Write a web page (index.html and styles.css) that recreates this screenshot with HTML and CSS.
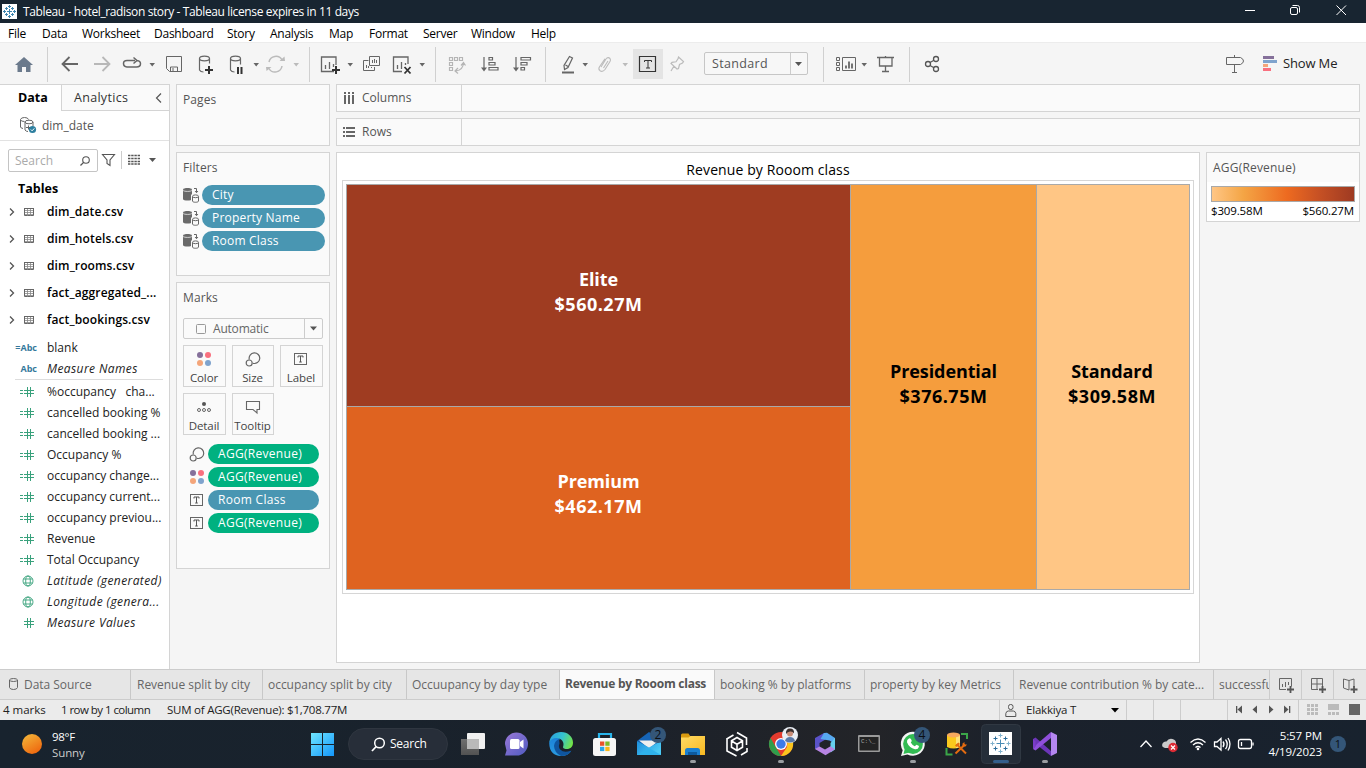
FILE: index.html
```html
<!DOCTYPE html>
<html lang="en">
<head>
<meta charset="utf-8">
<title>Tableau - hotel_radison story</title>
<link rel="stylesheet" href="styles.css">
</head>
<body>
<svg class="defs" width="0" height="0">
  <defs>
    <symbol id="chev" viewBox="0 0 6 8"><path d="M1 0.5L4.5 4 1 7.500" fill="none" stroke="#555" stroke-width="1.300"/></symbol>
    <symbol id="table" viewBox="0 0 10 10"><path d="M.5 1.500h9v7h-9zM0 1.500h10" fill="none" stroke="#666"/><path d="M1 3.500h8M1 5.500h8M1 7.500h8M3.500 2v7M6.500 2v7" fill="none" stroke="#888" stroke-width=".8"/></symbol>
    <symbol id="calc" viewBox="0 0 14 10"><path d="M0 3.500h3M0 6.500h3M4 3.500h10M4 6.500h10M7.500 0v10M10.500 0v10" fill="none" stroke="#39a17c"/></symbol>
    <symbol id="hash" viewBox="0 0 14 10"><path d="M4 3.500h10M4 6.500h10M7.500 0v10M10.500 0v10" fill="none" stroke="#39a17c"/></symbol>
    <symbol id="globe" viewBox="0 0 12 12"><g fill="none" stroke="#39a17c" stroke-width=".9"><circle cx="6" cy="6" r="5"/><ellipse cx="6" cy="6" rx="2.300" ry="5"/><path d="M1.500 4h9M1.500 8h9"/></g></symbol>
    <symbol id="ctx" viewBox="0 0 17 16"><path d="M0 2.500C0 .5 9 .5 9 2.500V12c0 2-9 2-9 0z" fill="#6a6a6a"/><path d="M0 3.300c1 1.500 8 1.500 9 0" fill="none" stroke="#e8e8e8" stroke-width=".8"/><path d="M8 7.500h4v8H8z" fill="#fafafa"/><path d="M9.500 9.500v4.500c0 1.700 6 1.700 6 0V9.500" fill="#fafafa" stroke="#666"/><ellipse cx="12.500" cy="9.300" rx="3" ry="1.400" fill="#fafafa" stroke="#666"/><path d="M11 1.500h2.500v4M12 4l1.500 1.700L15 4" fill="none" stroke="#666"/></symbol>
    <symbol id="sizei" viewBox="0 0 16 16"><g fill="none" stroke="#666" stroke-width="1.200"><path d="M4.300 8.500A5.300 5.300 0 1 1 8 12.300"/><circle cx="4.200" cy="12" r="3"/></g></symbol>
    <symbol id="colori" viewBox="0 0 16 16"><circle cx="4" cy="4" r="3" fill="#85709a"/><circle cx="12" cy="4" r="3" fill="#f9707f"/><circle cx="4" cy="12" r="3" fill="#f4a57a"/><circle cx="12" cy="12" r="3" fill="#7fa3cd"/></symbol>
    <symbol id="labeli" viewBox="0 0 13 12"><rect x=".5" y=".5" width="12" height="11" fill="none" stroke="#666"/><path d="M4 4.500v-1.500h5v1.500M6.500 3v6M5.200 9h2.600" fill="none" stroke="#555"/></symbol>
  </defs>
</svg>

<header class="titlebar">
  <svg class="appicon" width="15" height="15" viewBox="0 0 15 15"><rect width="15" height="15" fill="#fff"/><path d="M7.500 5v5M5 7.500h5M7.500 1v3M6 2.500h3M7.500 11v3M6 12.500h3M1 7.500h3M2.500 6v3M11 7.500h3M12.500 6v3M4.500 3v3M3 4.500h3M10.500 3v3M9 4.500h3M4.500 9v3M3 10.500h3M10.500 9v3M9 10.500h3" stroke="#3f86b0" fill="none"/></svg>
  <span class="apptitle">Tableau - hotel_radison story - Tableau license expires in 11 days</span>
  <svg class="winctl" width="126" height="23" viewBox="1240 0 126 23"><path d="M1245 10.500h10" stroke="#fff"/><g fill="none" stroke="#fff"><rect x="1290.500" y="7.500" width="7" height="7" rx="1.500"/><path d="M1292.500 5.500h5q2 0 2 2v5M1336.500 5.500l9.500 9.500M1346 5.500l-9.500 9.500"/></g></svg>
</header>

<nav class="menubar">
  <span class="m1">File</span><span class="m2">Data</span><span class="m3">Worksheet</span><span class="m4">Dashboard</span><span class="m5">Story</span><span class="m6">Analysis</span><span class="m7">Map</span><span class="m8">Format</span><span class="m9">Server</span><span class="m10">Window</span><span>Help</span>
</nav>

<div class="toolbar">
  <svg width="704" height="41" viewBox="0 43 704 41">
    <g stroke="#d0d0d0"><path d="M47.500 47v35M309.500 47v35M435.500 47v35M545.500 47v35"/></g>
    <path d="M24 57l9 8h-2.500v7h-4.500v-5h-4v5h-4.500v-7H15z" fill="#6b7a8c"/>
    <path d="M62.500 64H78M69.500 57l-7 7 7 7" stroke="#666" stroke-width="1.800" fill="none"/>
    <path d="M94 64h15.500M102.500 57l7 7-7 7" stroke="#b8b8b8" stroke-width="1.800" fill="none"/>
    <path d="M135 60.500h-8q-3.500 0-3.500 3t3.500 3.500h9.500q4 0 4-3.200 0-3-3.500-3.300M133.500 57.500l3.500 3-3.500 3" stroke="#666" stroke-width="1.500" fill="none"/>
    <g fill="#666"><path d="M149.500 63h5.500l-2.800 3.500zM253.500 63h5.500l-2.800 3.500zM347.500 63h5.500l-2.800 3.500zM419.500 63h5.500l-2.800 3.500zM582.500 63h5.500l-2.800 3.500z"/></g>
    <path d="M293.500 63h5.500l-2.800 3.500zM622.500 63h5.500l-2.800 3.500z" fill="#bbb"/>
    <path d="M166.500 56.500h15v15h-12l-3-3zM170.500 71v-4h7v4M173 68v3" stroke="#666" fill="none"/>
    <g fill="none" stroke="#666" stroke-width="1.200"><ellipse cx="204.500" cy="58.500" rx="5" ry="2.300"/><path d="M199.500 58.500V70q1 2 4 2M209.500 58.500v5"/><ellipse cx="235.500" cy="58.500" rx="5" ry="2.300"/><path d="M230.500 58.500V70q1 2 4 2M240.500 58.500v6"/></g>
    <path d="M209 66v8M205 70h8M238 67v7M241.500 67v7" stroke="#333" stroke-width="2" fill="none"/>
    <g fill="none" stroke="#bbb" stroke-width="1.500"><path d="M269 62a7 7 0 0 1 13-2M282 66a7 7 0 0 1-13 2.500"/></g><path d="M279.500 61h5.500l-.5-4.500zM266 67h5.500l-5 4z" fill="#bbb"/>
    <path d="M334 71.500h-12.500v-14.500h14.500V65M325.500 69v-4M329.500 69v-7M333.500 67v-3" stroke="#666" stroke-width="1.300" fill="none"/><path d="M336 66v8M332 70h8" stroke="#333" stroke-width="2"/>
    <path d="M368.500 60.500h-5v10h11v-3.500M369.500 56.500h10v9h-10zM372.500 63v-3M374.500 63v-4M376.500 63v-3M366.500 68v-3M368.500 68v-2M371.500 68v-1" stroke="#666" fill="none"/>
    <path d="M402 71.500h-8.500v-14.500h14.500V64M397.500 69v-4M401.500 69v-7M405.500 65v-2" stroke="#666" stroke-width="1.300" fill="none"/><path d="M404.500 67l6 6.500M410.500 67l-6 6.500" stroke="#333" stroke-width="1.800"/>
    <g fill="none" stroke="#b5b5b5" stroke-width="1.200"><path d="M449.500 57.500h3v3h-3zM454.500 57.500h3v3h-3zM459.500 57.500h3v3h-3zM449.500 62.500h3v3h-3zM449.500 67.500h3v3h-3zM456 71q7-1 7.500-8M461 65.500l2.500-3 2 3M458 68l-3 3 3 2.500"/></g>
    <g fill="none" stroke="#666" stroke-width="1.200"><path d="M484 57V69M489 57.500h3.500v2.500h-3.500zM489 62.500h6v2.500h-6zM489 67.500h9v2.500h-9zM516 57V69M521 57.500h9.500v2.500h-9.500zM521 62.500h6v2.500h-6zM521 67.500h3.500v2.500h-3.500z"/>
    <path d="M569.500 56.500l3 1.500-4.500 9.500-3.500 2-.5-4zM565.500 65l3 1.800"/></g>
    <path d="M481 67.500h6L484 71.500zM513 67.500h6L516 71.500z" fill="#666"/>
    <path d="M562 71.500h12v2h-12z" fill="#666"/>
    <path d="M601 67l5-8q2-2.500 4-.5 1 1.500 0 3l-5 8q-2.500 3-5 1.200-2-1.700-.5-4l5.500-8M603.500 68l4.500-7" fill="none" stroke="#bbb" stroke-width="1.100"/>
    <rect x="633" y="49" width="30" height="30" fill="#e4e4e4"/><path d="M639.500 56.500h16v15h-16z" fill="none" stroke="#333" stroke-width="1.200"/><path d="M644.500 62v-1.500h7V62M648 60.500v7.500M646 68h4" fill="none" stroke="#333"/>
    <path d="M678.500 57l5 4.500-1 1.500-3 1.500-1 4-1.500.5-6-5.500 1-1.200 4-.5 2-3zM674 66l-3 5" fill="none" stroke="#bbb" stroke-width="1.200"/>
  </svg>
  <div class="fit"><span>Standard</span><svg width="17" height="21" viewBox="0 0 17 21"><path d="M.5 0v21" stroke="#ccc"/><path d="M5 9h7L8.500 13z" fill="#555"/></svg></div>
  <svg width="475" height="41" viewBox="808 43 475 41">
    <path d="M823.500 47v35M909.500 47v35" stroke="#d0d0d0"/>
    <g fill="none" stroke="#666"><path d="M836.500 57.500h3v3h-3zM836.500 62.500h3v3h-3zM836.500 67.500h3v3h-3zM842.500 57.500h13v13h-13z"/><path d="M846 68.500v-3M849 68.500v-7M852 68.500v-5" stroke-width="1.800"/></g><path d="M861.500 63h5.500l-2.800 3.500z" fill="#666"/>
    <path d="M877 57.500h17M879.500 57.500v8.500h12.500v-8.500M885.500 56v2M885.500 66v5.500M882 71.500h7" fill="none" stroke="#666" stroke-width="1.300"/>
    <g fill="none" stroke="#555" stroke-width="1.300"><circle cx="928" cy="64" r="2.500"/><circle cx="936" cy="59" r="2.500"/><circle cx="936" cy="69" r="2.500"/><path d="M930 62.500l4-2.200M930 65.500l4 2.200"/></g>
    <path d="M1226.500 57.500h14q3 1.500 3 3.500t-3 3.500h-14zM1234.500 55v2.500M1234.500 65v7.500M1232 72.500h5" fill="none" stroke="#666"/>
    <path d="M1263 56h11v3h-11z" fill="#85709a"/><path d="M1263 60h14v3h-14z" fill="#7fa3cd"/><path d="M1263 64h5v3h-5z" fill="#f4a57a"/><path d="M1263 68h8v3h-8z" fill="#f9707f"/>
  </svg>
  <span class="showme">Show Me</span>
</div>

<main class="work">
  <aside class="side">
    <div class="sidetabs"><div class="t-data">Data</div><div class="t-an"><span>Analytics</span><svg width="7" height="10" viewBox="0 0 7 10"><path d="M6 .5L1.500 5 6 9.500" fill="none" stroke="#555" stroke-width="1.200"/></svg></div></div>
    <div class="ds"><svg width="17" height="17" viewBox="0 0 17 17"><g fill="none" stroke="#666"><path d="M3 11.500Q.5 11 .5 10V2.500Q1 .5 4.500 .5t4 2M.5 3q1 1.500 4 1.500"/><ellipse cx="9" cy="5" rx="4" ry="1.800" /><path d="M5 5v8q1 1.500 3 1.500M13 5v4M6 10.500h4M8.500 8.500v4"/></g><circle cx="12.500" cy="12.500" r="3.600" fill="#2d7f9f"/><path d="M10.800 12.500l1.300 1.300 2.200-2.400" stroke="#fff" fill="none"/></svg><span>dim_date</span></div>
    <div class="searchrow"><div class="search"><span>Search</span><svg width="10" height="10" viewBox="0 0 10 10"><circle cx="6" cy="4" r="3.300" fill="none" stroke="#555" stroke-width="1.100"/><path d="M3.600 6.400L.5 9.500" stroke="#555" stroke-width="1.300"/></svg></div>
      <svg width="60" height="20" viewBox="100 150 60 20"><path d="M102.500 154.500h12l-4.500 5.500v5.500l-3-2v-3.500z" fill="none" stroke="#555" stroke-width="1.100"/><path d="M121.500 151v18" stroke="#ccc"/><path d="M128 155.500h12M128 158.500h12M128 161.500h12M128 164h12" stroke="#555" stroke-width="1.300" stroke-dasharray="2.400 .8"/><path d="M149 158h7l-3.500 4z" fill="#555"/></svg></div>
    <div class="tables">Tables</div>
    <div class="trow"><svg width="6" height="8"><use href="#chev"/></svg><svg width="10" height="10"><use href="#table"/></svg><span>dim_date.csv</span></div>
    <div class="trow"><svg width="6" height="8"><use href="#chev"/></svg><svg width="10" height="10"><use href="#table"/></svg><span>dim_hotels.csv</span></div>
    <div class="trow"><svg width="6" height="8"><use href="#chev"/></svg><svg width="10" height="10"><use href="#table"/></svg><span>dim_rooms.csv</span></div>
    <div class="trow"><svg width="6" height="8"><use href="#chev"/></svg><svg width="10" height="10"><use href="#table"/></svg><span>fact_aggregated_...</span></div>
    <div class="trow last"><svg width="6" height="8"><use href="#chev"/></svg><svg width="10" height="10"><use href="#table"/></svg><span>fact_bookings.csv</span></div>
    <div class="frow"><b>=Abc</b><span>blank</span></div>
    <div class="frow it"><b>Abc</b><span>Measure Names</span></div>
    <div class="fdiv"></div>
    <div class="frow"><svg width="14" height="10"><use href="#calc"/></svg><span>%occupancy &nbsp; cha...</span></div>
    <div class="frow"><svg width="14" height="10"><use href="#calc"/></svg><span>cancelled booking %</span></div>
    <div class="frow"><svg width="14" height="10"><use href="#calc"/></svg><span>cancelled booking ...</span></div>
    <div class="frow"><svg width="14" height="10"><use href="#calc"/></svg><span>Occupancy %</span></div>
    <div class="frow"><svg width="14" height="10"><use href="#calc"/></svg><span>occupancy change...</span></div>
    <div class="frow"><svg width="14" height="10"><use href="#calc"/></svg><span>occupancy current...</span></div>
    <div class="frow"><svg width="14" height="10"><use href="#calc"/></svg><span>occupancy previou...</span></div>
    <div class="frow"><svg width="14" height="10"><use href="#calc"/></svg><span>Revenue</span></div>
    <div class="frow"><svg width="14" height="10"><use href="#calc"/></svg><span>Total Occupancy</span></div>
    <div class="frow it"><svg class="gl" width="12" height="12"><use href="#globe"/></svg><span>Latitude (generated)</span></div>
    <div class="frow it"><svg class="gl" width="12" height="12"><use href="#globe"/></svg><span>Longitude (genera...</span></div>
    <div class="frow it"><svg width="14" height="10"><use href="#hash"/></svg><span>Measure Values</span></div>
  </aside>

  <section class="cards">
    <div class="card pages"><h3>Pages</h3></div>
    <div class="card filters"><h3>Filters</h3>
      <div class="prow"><svg width="17" height="16"><use href="#ctx"/></svg><div class="pill blue">City</div></div>
      <div class="prow"><svg width="17" height="16"><use href="#ctx"/></svg><div class="pill blue">Property Name</div></div>
      <div class="prow"><svg width="17" height="16"><use href="#ctx"/></svg><div class="pill blue">Room Class</div></div>
    </div>
    <div class="card marks"><h3>Marks</h3>
      <div class="msel"><svg width="10" height="10" viewBox="0 0 10 10"><rect x=".5" y=".5" width="9" height="9" rx="1" fill="none" stroke="#999"/></svg><span>Automatic</span><svg width="18" height="19" viewBox="0 0 18 19"><path d="M.5 0v19" stroke="#ccc"/><path d="M6 7.500h7L9.500 11.500z" fill="#555"/></svg></div>
      <div class="mgrid">
        <div class="mb"><svg width="16" height="16"><use href="#colori"/></svg><span>Color</span></div>
        <div class="mb"><svg width="16" height="16"><use href="#sizei"/></svg><span>Size</span></div>
        <div class="mb"><svg width="16" height="16" viewBox="-1 -2 16 16"><use href="#labeli" width="13" height="12"/></svg><span>Label</span></div>
        <div class="mb"><svg width="16" height="16" viewBox="0 0 16 16"><circle cx="8" cy="5" r="2" fill="#555"/><g fill="none" stroke="#666"><circle cx="3" cy="11" r="1.500"/><circle cx="8" cy="11" r="1.500"/><circle cx="13" cy="11" r="1.500"/></g></svg><span>Detail</span></div>
        <div class="mb"><svg width="16" height="16" viewBox="0 0 16 16"><path d="M1.500 2.500h13v8h-2.500v3.500l-4-3.500h-6.500z" fill="none" stroke="#666" stroke-width="1.100"/></svg><span>Tooltip</span></div>
      </div>
      <div class="prow mk"><svg width="16" height="16"><use href="#sizei"/></svg><div class="pill green">AGG(Revenue)</div></div>
      <div class="prow mk"><svg width="16" height="16"><use href="#colori"/></svg><div class="pill green">AGG(Revenue)</div></div>
      <div class="prow mk"><svg width="16" height="16" viewBox="-1 -2 16 16"><use href="#labeli" width="13" height="12"/></svg><div class="pill blue">Room Class</div></div>
      <div class="prow mk"><svg width="16" height="16" viewBox="-1 -2 16 16"><use href="#labeli" width="13" height="12"/></svg><div class="pill green">AGG(Revenue)</div></div>
    </div>
  </section>

  <section class="viewcol">
    <div class="shelf"><div class="shl"><svg width="12" height="13" viewBox="0 0 12 13"><path d="M2 0v2M6 0v2M10 0v2M2 3v9M6 3v9M10 3v9" stroke="#666" stroke-width="2"/></svg><span>Columns</span></div></div>
    <div class="shelf"><div class="shl"><svg width="12" height="13" viewBox="0 0 12 13"><path d="M0 2h2M0 6h2M0 10h2M3 2h9M3 6h9M3 10h9" stroke="#666" stroke-width="2"/></svg><span>Rows</span></div></div>
    <div class="viewrow">
      <div class="view">
        <div class="vtitle">Revenue by Rooom class</div>
        <div class="frame"><div class="tree">
          <div class="tm elite"><span>Elite</span><span class="val">$560.27M</span></div>
          <div class="tm premium"><span>Premium</span><span class="val">$462.17M</span></div>
          <div class="tm pres"><span>Presidential</span><span class="val">$376.75M</span></div>
          <div class="tm stand"><span>Standard</span><span class="val">$309.58M</span></div>
        </div></div>
      </div>
      <div class="legend"><h3>AGG(Revenue)</h3><div class="lbody"><div class="ramp"></div><div class="lval"><span>$309.58M</span><span>$560.27M</span></div></div></div>
    </div>
  </section>
</main>

<div class="tabs">
  <div class="tab dsrc"><svg width="9" height="12" viewBox="0 0 9 12"><path d="M.5 2v7.500q.5 2 4 2t4-2V2q-.5-1.500-4-1.500T.5 2q.5 1.500 4 1.500T8.500 2" fill="none" stroke="#666"/></svg><span>Data Source</span></div>
  <div class="tab w1">Revenue split by city</div><div class="tab w2">occupancy split by city</div><div class="tab w3">Occuupancy by day type</div><div class="tab w4 on">Revenue by Rooom class</div><div class="tab w5">booking % by platforms</div><div class="tab w6">property by key Metrics</div><div class="tab w7">Revenue contribution % by cate...</div><div class="tab w8">successfu</div>
  <svg width="97" height="29" viewBox="1269 670 97 29"><path d="M1269.500 670v29M1301.500 670v29M1333.500 670v29" stroke="#ccc"/><g fill="none" stroke="#666"><path d="M1286 689.500h-6.500v-11h12v8M1282.500 687v-3M1285.500 687v-5M1288.500 685v-3M1318 689.500h-6.500v-11h11v8M1311.500 684h11M1317 678.500v11M1349 690l-5.500-2v-9l5.500 1.500 5-1.500v8M1349 680.500V690"/></g><path d="M1290.500 686v7M1287 689.500h7M1322.500 686v7M1319 689.500h7M1354 686v7M1350.500 689.500h7" stroke="#555" stroke-width="1.800"/></svg>
</div>

<div class="status">
  <span class="s1">4 marks</span><span class="s2">1 row by 1 column</span><span class="s3">SUM of AGG(Revenue): $1,708.77M</span>
  <div class="user"><svg width="12" height="13" viewBox="0 0 12 13"><g fill="none" stroke="#555"><rect x="3.500" y=".5" width="4.500" height="5" rx="2"/><path d="M.8 12.500v-3q.5-2.500 2.500-2.500h5q2 0 2.500 2.500v3z"/></g></svg><span>Elakkiya T</span><svg width="8" height="5" viewBox="0 0 8 5"><path d="M0 0h8L4 4.500z" fill="#000"/></svg></div>
  <svg width="240" height="20" viewBox="1126 700 240 20"><path d="M1126.500 700v20M1153.500 700v20M1180.500 700v20M1227.500 700v20M1298.500 700v20" stroke="#ccc"/><path d="M1236 706h1.300v7h-1.300zM1242 705.500v8l-4.500-4zM1257 705.500v8l-4.500-4zM1269 705.500v8l4.500-4zM1284 705.500v8l4.500-4zM1289 706h1.300v7H1289z" fill="#555"/><path d="M1307 704h3v3h-3zM1311 704h3v3h-3zM1315 704h3v3h-3zM1307 708h3v3h-3zM1311 708h3v3h-3zM1315 708h3v3h-3zM1307 712h3v3h-3zM1311 712h3v3h-3zM1315 712h3v3h-3zM1328 704h11v6h-11zM1328 712h3v3h-3zM1332 712h3v3h-3zM1336 712h3v3h-3z" fill="#bbb"/><path d="M1349 704h11v11h-11z" fill="#666"/></svg>
</div>

<footer class="taskbar">
  <div class="weather"><svg width="20" height="20" viewBox="0 0 20 20"><defs><linearGradient id="sun" x1="0" y1="0" x2=".6" y2="1"><stop offset="0" stop-color="#f3bb3c"/><stop offset="1" stop-color="#ef6a10"/></linearGradient></defs><circle cx="10" cy="10" r="10" fill="url(#sun)"/></svg><div><span class="deg">98°F</span><span class="sunny">Sunny</span></div></div>
  <svg class="win" width="23" height="23" viewBox="0 0 23 23"><defs><linearGradient id="wg" x1="0" y1="0" x2="1" y2="1"><stop offset="0" stop-color="#6fe6ff"/><stop offset="1" stop-color="#1396fb"/></linearGradient></defs><path d="M0 0h11v11H0zM12 0h11v11H12zM0 12h11v11H0zM12 12h11v11H12z" fill="url(#wg)"/></svg>
  <div class="tsearch"><svg width="15" height="15" viewBox="0 0 15 15"><circle cx="8.500" cy="6" r="4.800" fill="none" stroke="#fff" stroke-width="1.500"/><path d="M5.200 9.500L1 14" stroke="#fff" stroke-width="1.800"/></svg><span>Search</span></div>
  <svg class="apps" width="812" height="48" viewBox="448 720 812 48">
    <defs>
      <linearGradient id="edge" x1="0" y1=".3" x2="1" y2=".6"><stop offset="0" stop-color="#2aa0dc"/><stop offset=".5" stop-color="#35c3d0"/><stop offset="1" stop-color="#74e445"/></linearGradient>
      <linearGradient id="edgeb" x1="0" y1="0" x2="0" y2="1"><stop offset="0" stop-color="#1c82d8"/><stop offset="1" stop-color="#2a9be0"/></linearGradient>
      <linearGradient id="chat" x1="0" y1="0" x2="1" y2="1"><stop offset="0" stop-color="#9a78d8"/><stop offset="1" stop-color="#4f5bc0"/></linearGradient>
      <linearGradient id="fold" x1="0" y1="0" x2="1" y2="1"><stop offset="0" stop-color="#ffdb65"/><stop offset="1" stop-color="#f8b821"/></linearGradient>
      <linearGradient id="mail" x1="0" y1="0" x2="1" y2=".5"><stop offset="0" stop-color="#1c8edc"/><stop offset="1" stop-color="#4bcaf5"/></linearGradient>
      <linearGradient id="grayv" x1="0" y1="0" x2="0" y2="1"><stop offset="0" stop-color="#6f6f6f"/><stop offset="1" stop-color="#525252"/></linearGradient>
    </defs>
    <rect x="467" y="733" width="18" height="16" rx="1" fill="#f1f1f1"/><rect x="461" y="739" width="18" height="16" fill="url(#grayv)"/><rect x="467" y="739" width="12" height="10" fill="#b9b9b9"/>
    <path d="M505 744a11.500 11.500 0 1 1 11.500 11.500H505l1.500-5z" fill="url(#chat)"/><rect x="510" y="739" width="9.500" height="10" rx="1.500" fill="#fff"/><path d="M520 742l3.500-2.500v9l-3.500-2.500z" fill="#fff"/>
    <path d="M549.200 743C550 738 556 736 560 739q-3 2-3 6.500 1 7 8.500 7.500 4 0 6-2.500-3.500 5.500-10.500 5.500-11.500-.5-11.800-13z" fill="url(#edgeb)"/><path d="M559 739q-4.500 2-5 7 .5 7 7 10 6.500 0 10-4.500l-.5-.8q-6.500 2.800-10.300-1.200-2.200-2.500-.7-6z" fill="#0f559f"/><path d="M549.300 742.500C550 736 555 732 561 732c7 0 12 5 12 10.500 0 5-3.500 6.500-6.500 6.500-2.500 0-4.200-1-3.200-3 1.200-4-2-8-6.800-8-3.500 0-6 2-7.200 4.500z" fill="url(#edge)"/>
    <path d="M599 739v-5h12v5" fill="none" stroke="#29b5ec" stroke-width="2.200"/><rect x="593" y="738" width="23" height="18" rx="2.500" fill="#f6f6f6"/><path d="M600 741.500h4.300v4.300H600z" fill="#e9532b"/><path d="M605.300 741.500h4.300v4.300h-4.300z" fill="#7db928"/><path d="M600 746.800h4.300v4.300H600z" fill="#2aa5e9"/><path d="M605.300 746.800h4.300v4.300h-4.300z" fill="#fbb717"/>
    <path d="M637 741l12-9 12 9-12 8z" fill="#1664b5"/><path d="M639 740.500h20l-10 8z" fill="#efefef"/><path d="M637 741l12 6.500 12-6.500v14h-24z" fill="url(#mail)"/><path d="M637 755l11-6.500h2l11 6.500z" fill="#2fb2ec"/><circle cx="658" cy="735" r="8" fill="#345678"/>
    <path d="M681 735q0-1.500 1.500-1.500h6l2 3h12q2 0 2 2H681z" fill="#d99a10"/><path d="M681 737.500h7.500l2-1.500H705V755h-24z" fill="url(#fold)"/><path d="M685 755v-4.500q0-2.500 2.500-2.500h10q2.500 0 2.500 2.500v4.500z" fill="#1a7fd0"/><path d="M688 752h9v3h-9z" fill="#0d599d"/>
    <g fill="none" stroke="#fff" stroke-width="1.600"><path d="M727 750v-12M727.500 738.500l6-3.500M737 732.500l9.500 5.500v7M747 748v3.500l-6 3.500M727 746v5l9.500 5M737 737.500l5.500 3.300v6.400l-5.500 3.300-5.500-3.300v-6.400zM731.500 741l5.500 3.200 5.500-3.200M737 744.500v6"/></g>
    <circle cx="781" cy="744" r="12" fill="#e33b2e"/><path d="M770.600 738L776 747.500 781 756A12 12 0 0 1 770.600 738z" fill="#2f9d4c"/><path d="M781 756l6-9 .5-7h5A12 12 0 0 1 781 756z" fill="#fbc51e"/><circle cx="781" cy="744" r="6" fill="#fff"/><circle cx="781" cy="744" r="4.700" fill="#3d7be8"/>
    <circle cx="790" cy="735" r="8" fill="#e9eef5"/><circle cx="790" cy="733.500" r="3" fill="#c98d78"/><path d="M786 734q-.5-5.500 4-5.500 4.500 0 4 5-1.500-2.500-4-2-2.500 0-4 2.500z" fill="#3a302f"/><path d="M785 741q1-4 5-4t5 4q-5 3-10 0z" fill="#5878a8"/>
    <path d="M824 733l-9 5v11l4.500 1.500V743l6-3.500z" fill="#5a52c8"/><path d="M824 733l3-.3 8 5.300v6l-5.500-3.500-9-1.500z" fill="#57a8f0"/><path d="M835 738v11.500l-4.500 3V743z" fill="#66d0ee"/><path d="M815 749l4.500-2.500 5.500 3 5.500-3.200 4.500 3-9.500 6z" fill="#b784e3"/>
    <rect x="858" y="735" width="22" height="17" rx="1" fill="#9a9a9a"/><rect x="859.500" y="737" width="19" height="13.500" fill="#232323"/><text x="861" y="743" class="cmd">C:\_</text>
    <path d="M901 756l1.700-5.800A12 12 0 1 1 907.500 754.500z" fill="#f5f5f5"/><circle cx="913" cy="744" r="9.900" fill="#32bb53"/><path d="M903.500 754l1.500-6 4.500 4.500z" fill="#32bb53"/><path d="M909 738.500q2-1 2.800 2.500l-1 1.500q1.200 2.500 4 3.700l1.700-1.500q3 .8 2.500 2-1 3-4 2.500-6-1.500-8-7-.5-2.500 2-3.700z" fill="#fff"/><circle cx="922" cy="735" r="8" fill="#345678"/>
    <path d="M947 735v12q6.500 3 13 0v-12z" fill="#fbc91d"/><path d="M956 735v13q2 0 4-1v-12z" fill="#fde27a"/><ellipse cx="953.500" cy="735" rx="6.500" ry="2.500" fill="#f6a95e"/><path d="M961 734h6v5M946.500 748v6.500h6" fill="none" stroke="#3ba648" stroke-width="2"/><path d="M956.500 744l9.500 9.500M965 744.500l-9.500 9" stroke="#e36b10" stroke-width="2"/><path d="M955 745.500l3.500-3 1.500 1.500-3.500 3zM962.500 743.500l2-1.500v2.500h2.500l-1.500 2-3 0z" fill="#e36b10"/>
    <rect x="981.500" y="724.500" width="39" height="39" rx="4" fill="#252e39" stroke="#303842"/><rect x="989" y="732" width="23" height="23" fill="#fff"/><g fill="none"><path d="M1000.500 739.500v8M996.500 743.500h8" stroke="#4a8cb5"/><path d="M1000.500 733.500v4M998.500 735.500h4M1000.500 749.500v4M998.500 751.500h4M990.500 743.500h4M992.500 741.500v4M1006.500 743.500h4M1008.500 741.500v4" stroke="#7fb0cc"/><path d="M995.500 736.500v4M993.500 738.500h4M1005.500 736.500v4M1003.500 738.500h4M995.500 746.500v4M993.500 748.500h4M1005.500 746.500v4M1003.500 748.500h4" stroke="#2f6f9d"/></g><rect x="993" y="760" width="16" height="3" rx="1.500" fill="#345f8c"/>
    <path d="M1051 732l-14 12.500-2-1.500-2 1v-5l2.200-1.500L1051 750v6l6-2.500v-19z" fill="none"/><path d="M1033 739l2.500-1.500L1051 751v5l-14-11-4 4z" fill="#6c35b8"/><path d="M1033 749l2.500 1.500 15.500-12.500v-6L1037 744z" fill="#8f4fdb"/><path d="M1033 739v10l2.500-2.500v-5z" fill="#7a3dc8"/><path d="M1051 732l6 3v18l-6 3z" fill="#b487f0"/>
    <g fill="#9a9da1"><rect x="690" y="760" width="6" height="3" rx="1.500"/><rect x="778" y="760" width="6" height="3" rx="1.500"/><rect x="910" y="760" width="6" height="3" rx="1.500"/><rect x="1042" y="760" width="6" height="3" rx="1.500"/></g>
    <text x="658" y="739" class="badge">2</text><text x="922" y="739" class="badge">4</text>
    <path d="M1140.500 747l5.500-6 5.500 6" fill="none" stroke="#fff" stroke-width="1.300"/>
    <path d="M1165 748q-4-1-2.500-4.500 1.500-2.500 4-2 2-3.500 6-2.500 4 1 3.500 5v4z" fill="#c9c9c9"/><circle cx="1173" cy="747.500" r="4.700" fill="#dc2b35"/><path d="M1171 745.500l4 4M1175 745.500l-4 4" stroke="#fff" stroke-width="1.200"/>
    <g fill="none" stroke="#fff" stroke-width="1.300"><path d="M1190.500 742.500q7.500-7 15 0M1193 745q5-4.500 10 0M1195.500 747.500q2.500-2 5 0"/><path d="M1214.500 742v4.500h2.500l4 3.500v-11.500l-4 3.500zM1223 741.500q2 2.700 0 5.500M1225.500 739.500q3.500 4.700 0 9.500M1228 738q4 6 0 12.500"/><rect x="1238.500" y="739.500" width="13" height="9" rx="2"/><path d="M1253 742.500v3M1241.500 742v4"/></g><circle cx="1198" cy="749" r="1.300" fill="#fff"/>
  </svg>
  <div class="clock"><span>5:57 PM</span><span>4/19/2023</span></div>
  <div class="notif">1</div>
</footer>
</body>
</html>
```
FILE: styles.css
```css
* { box-sizing: border-box; }
body { margin: 0; width: 1366px; height: 768px; overflow: hidden; background: #f5f5f5; font: 12px/16px "Open Sans", "Noto Sans", sans-serif; color: #333; display: flex; flex-direction: column; white-space: nowrap; }
svg { flex: none; display: block; }
h3 { margin: 0; font-weight: 400; font-size: 12px; line-height: 16px; color: #555; letter-spacing: .1px; }
.defs { position: absolute; }

.titlebar { height: 23px; flex: none; background: #182531; display: flex; align-items: center; padding-left: 2px; color: #fff; }
.apptitle { margin-left: 6px; padding-top: 1px; font-size: 12px; letter-spacing: -0.38px; flex: 1; }

.menubar { height: 20px; flex: none; background: #fff; border-bottom: 1px solid #ececec; display: flex; align-items: center; padding-left: 8px; color: #000; font-size: 12px; letter-spacing: -0.25px; padding-top: 3px; }
.m1 { width: 34px; } .m2 { width: 40px; } .m3 { width: 72px; } .m4 { width: 73px; } .m5 { width: 43px; } .m6 { width: 59px; } .m7 { width: 40px; } .m8 { width: 54px; } .m9 { width: 48px; } .m10 { width: 60px; }

.toolbar { height: 41px; flex: none; display: flex; align-items: center; }
.fit { width: 104px; height: 23px; border: 1px solid #c6c6c6; border-radius: 2px; display: flex; align-items: center; justify-content: space-between; padding-left: 7px; font-size: 12.500px; letter-spacing: .35px; color: #555; background: #f7f7f7; }
.showme { font-size: 13px; color: #222; letter-spacing: -.15px; padding-bottom: 1px; }

.work { height: 585px; flex: none; display: flex; }
.side { width: 170px; background: #fff; border-right: 1px solid #d4d4d4; border-top: 1px solid #d4d4d4; flex: none; }
.sidetabs { display: flex; height: 26px; }
.t-data { width: 61px; padding: 5px 0 0 18px; font-weight: 700; font-size: 12.500px; color: #000; }
.t-an { flex: 1; border-left: 1px solid #d4d4d4; border-bottom: 1px solid #d4d4d4; background: #fafafa; display: flex; align-items: center; justify-content: space-between; padding: 0 7px 0 12px; font-size: 12.500px; letter-spacing: .3px; }
.ds { height: 30px; border-bottom: 1px solid #e2e2e2; display: flex; align-items: center; padding-left: 20px; gap: 5px; color: #555; }
.searchrow { display: flex; padding: 8px 0 0 8px; height: 37px; gap: 2px; align-items: flex-start; }
.searchrow > svg { margin-top: 1px; }
.search { width: 90px; height: 23px; border: 1px solid #c4c4c4; border-radius: 2px; display: flex; align-items: center; justify-content: space-between; padding: 0 7px 0 6px; color: #aaa; }
.tables { font-weight: 700; font-size: 12.500px; color: #000; height: 20px; padding-left: 18px; line-height: 21px; }
.trow { height: 27px; display: flex; align-items: center; padding-left: 9px; color: #000; font-weight: 600; letter-spacing: .12px; }
.last { margin-bottom: 4px; }
.trow svg + svg { margin-left: 9px; }
.trow span { margin-left: 13px; }
.frow { height: 21px; display: flex; align-items: center; padding-left: 17px; color: #222; }
.frow > b:first-child { width: 20px; margin-right: 10px; }
.frow > svg:first-child { margin: 0 13px 0 3px; }
.frow > svg.gl:first-child { margin: 0 13px 0 5px; }
.frow b { font-size: 9px; font-weight: 700; color: #36799c; display: flex; justify-content: flex-end; }
.it span { font-style: italic; letter-spacing: .4px; }
.fdiv { border-top: 1px solid #ddd; margin: 0 6px 1px 15px; }

.cards { width: 154px; margin-left: 6px; flex: none; display: flex; flex-direction: column; gap: 6px; }
.card { border: 1px solid #d4d4d4; background: #fafafa; padding: 7px 0 0 6px; }
.pages { height: 62px; } .filters { height: 124px; } .marks { height: 287px; }
.prow { display: flex; height: 23px; align-items: center; }
.filters h3 { margin-bottom: 7px; }
.pill { height: 20px; border-radius: 10px; color: #fff; line-height: 19px; padding-left: 10px; width: 123px; margin-left: 2px; letter-spacing: .2px; }
.mk .pill { width: 111px; margin-left: 3px; letter-spacing: .3px; }
.mk { padding-left: 6px; }
.blue { background: #4996b2; } .green { background: #00b180; }
.msel { width: 140px; height: 21px; border: 1px solid #ccc; border-radius: 2px; margin-top: 12px; display: flex; align-items: center; padding-left: 12px; color: #666; }
.msel span { flex: 1; margin-left: 7px; letter-spacing: -.2px; }
.mgrid { display: grid; grid-template-columns: 43px 42px 43px; column-gap: 6px; row-gap: 6px; margin: 6px 0 7px; }
.mb { height: 42px; border: 1px solid #d4d4d4; display: flex; flex-direction: column; align-items: center; padding: 5px 1px 0 0; color: #444; font-size: 11.500px; }
.mb span { margin-top: 3px; letter-spacing: -.1px; }

.viewcol { margin-left: 6px; width: 1024px; flex: none; }
.shelf { height: 28px; border: 1px solid #d4d4d4; background: #fafafa; margin-bottom: 6px; }
.shl { width: 125px; height: 26px; border-right: 1px solid #d4d4d4; display: flex; align-items: center; padding-left: 6px; gap: 7px; color: #555; }
.viewrow { display: flex; gap: 6px; align-items: flex-start; }
.view { width: 864px; height: 511px; background: #fff; border: 1px solid #d4d4d4; padding: 9px 5px 0; }
.vtitle { text-align: center; font-size: 14px; letter-spacing: .1px; color: #000; height: 18px; line-height: 16px; }
.frame { width: 852px; height: 414px; border: 1px solid #d6d6d6; padding: 3px; }
.tree { width: 844px; height: 406px; border: 1px solid #a9a9a9; background: #a9a9a9; display: grid; grid-template-columns: 503px 185px 152px; grid-template-rows: 221px 182px; gap: 1px; }
.tm { display: flex; flex-direction: column; align-items: center; justify-content: center; font-weight: 700; font-size: 18px; line-height: 25px; color: #fff; letter-spacing: -.1px; }
.tm .val { letter-spacing: .5px; }
.elite { background: #9f3c21; padding-bottom: 7px; }
.premium { background: #df6320; padding-bottom: 8px; }
.pres { background: #f59d3d; grid-column: 2; grid-row: 1 / 3; color: #000; padding-bottom: 7px; }
.stand { background: #ffc685; grid-column: 3; grid-row: 1 / 3; color: #000; padding: 0 2px 7px 0; }
.legend { width: 154px; height: 70px; border: 1px solid #d4d4d4; background: #fff; }
.legend h3 { background: #fafafa; height: 29px; padding: 7px 0 0 6px; letter-spacing: .2px; }
.lbody { padding: 4px 4px 0; color: #000; }
.ramp { height: 16px; border: 1px solid #a9a9a9; background: linear-gradient(90deg, #ffc685 0%, #f4a545 22%, #ed6a20 53%, #c75124 75%, #9e3a22 100%); }
.lval { display: flex; justify-content: space-between; padding: 1px 1px 0 0; font-size: 11.500px; letter-spacing: -.15px; }

.tabs { height: 31px; flex: none; border-top: 1px solid #ccc; border-bottom: 1px solid #ccc; background: #e6e6e6; display: flex; color: #666; }
.tab { border-right: 1px solid #c8c8c8; line-height: 30px; padding-left: 6px; overflow: hidden; flex: none; letter-spacing: -.03px; }
.dsrc { width: 131px; display: flex; gap: 6px; padding-left: 9px; }
.dsrc svg { margin-top: 8px; }
.w1 { width: 132px; } .w2 { width: 144px; padding-left: 5px; } .w3 { width: 153px; padding-left: 5px; } .w4 { width: 155px; padding-left: 5px; } .w5 { width: 150px; padding-left: 5px; } .w6 { width: 149px; padding-left: 5px; } .w7 { width: 200px; padding-left: 5px; } .w8 { width: 55px; padding-left: 5px; border: 0; }
.on { background: #fafafa; font-weight: 700; color: #555; line-height: 27px; letter-spacing: -.25px; }

.status { height: 20px; flex: none; background: #ebebeb; display: flex; align-items: center; padding-left: 3px; font-size: 11.500px; color: #222; }
.s1 { width: 58px; } .s2 { width: 106px; letter-spacing: -.55px; } .s3 { flex: 1; letter-spacing: -.23px; }
.user { width: 127px; height: 20px; border-left: 1px solid #ccc; display: flex; align-items: center; padding: 0 7px 0 5px; }
.user span { flex: 1; margin-left: 9px; letter-spacing: -.2px; }

.taskbar { height: 48px; flex: none; display: flex; align-items: center; background: linear-gradient(90deg, #18232e 0%, #19222c 30%, #1b212a 45%, #232428 64%, #1b212b 74%, #18222e 100%); color: #fff; }
.weather { width: 311px; display: flex; align-items: center; padding-left: 22px; gap: 10px; font-size: 11.500px; }
.weather div { display: flex; flex-direction: column; padding-top: 2px; }
.weather .sunny { color: #ccc; letter-spacing: -.1px; }
.weather .deg { letter-spacing: -.3px; }
.tsearch { width: 100px; height: 32px; margin-left: 14px; border-radius: 16px; background: #272e39; border: 1px solid #2f3640; display: flex; align-items: center; padding-left: 22px; gap: 4px; font-size: 12px; letter-spacing: -.25px; }
.badge { font: 12px "Open Sans", sans-serif; fill: #0b0f14; text-anchor: middle; }
.cmd { font: 6px "Liberation Mono", monospace; fill: #aaa; }
.clock { width: 62px; display: flex; flex-direction: column; align-items: flex-end; font-size: 11.500px; letter-spacing: -.1px; }
.notif { width: 16px; height: 16px; border-radius: 50%; background: #345678; color: #0b0f14; text-align: center; margin-left: 8px; font-size: 11px; line-height: 16px; }
```
